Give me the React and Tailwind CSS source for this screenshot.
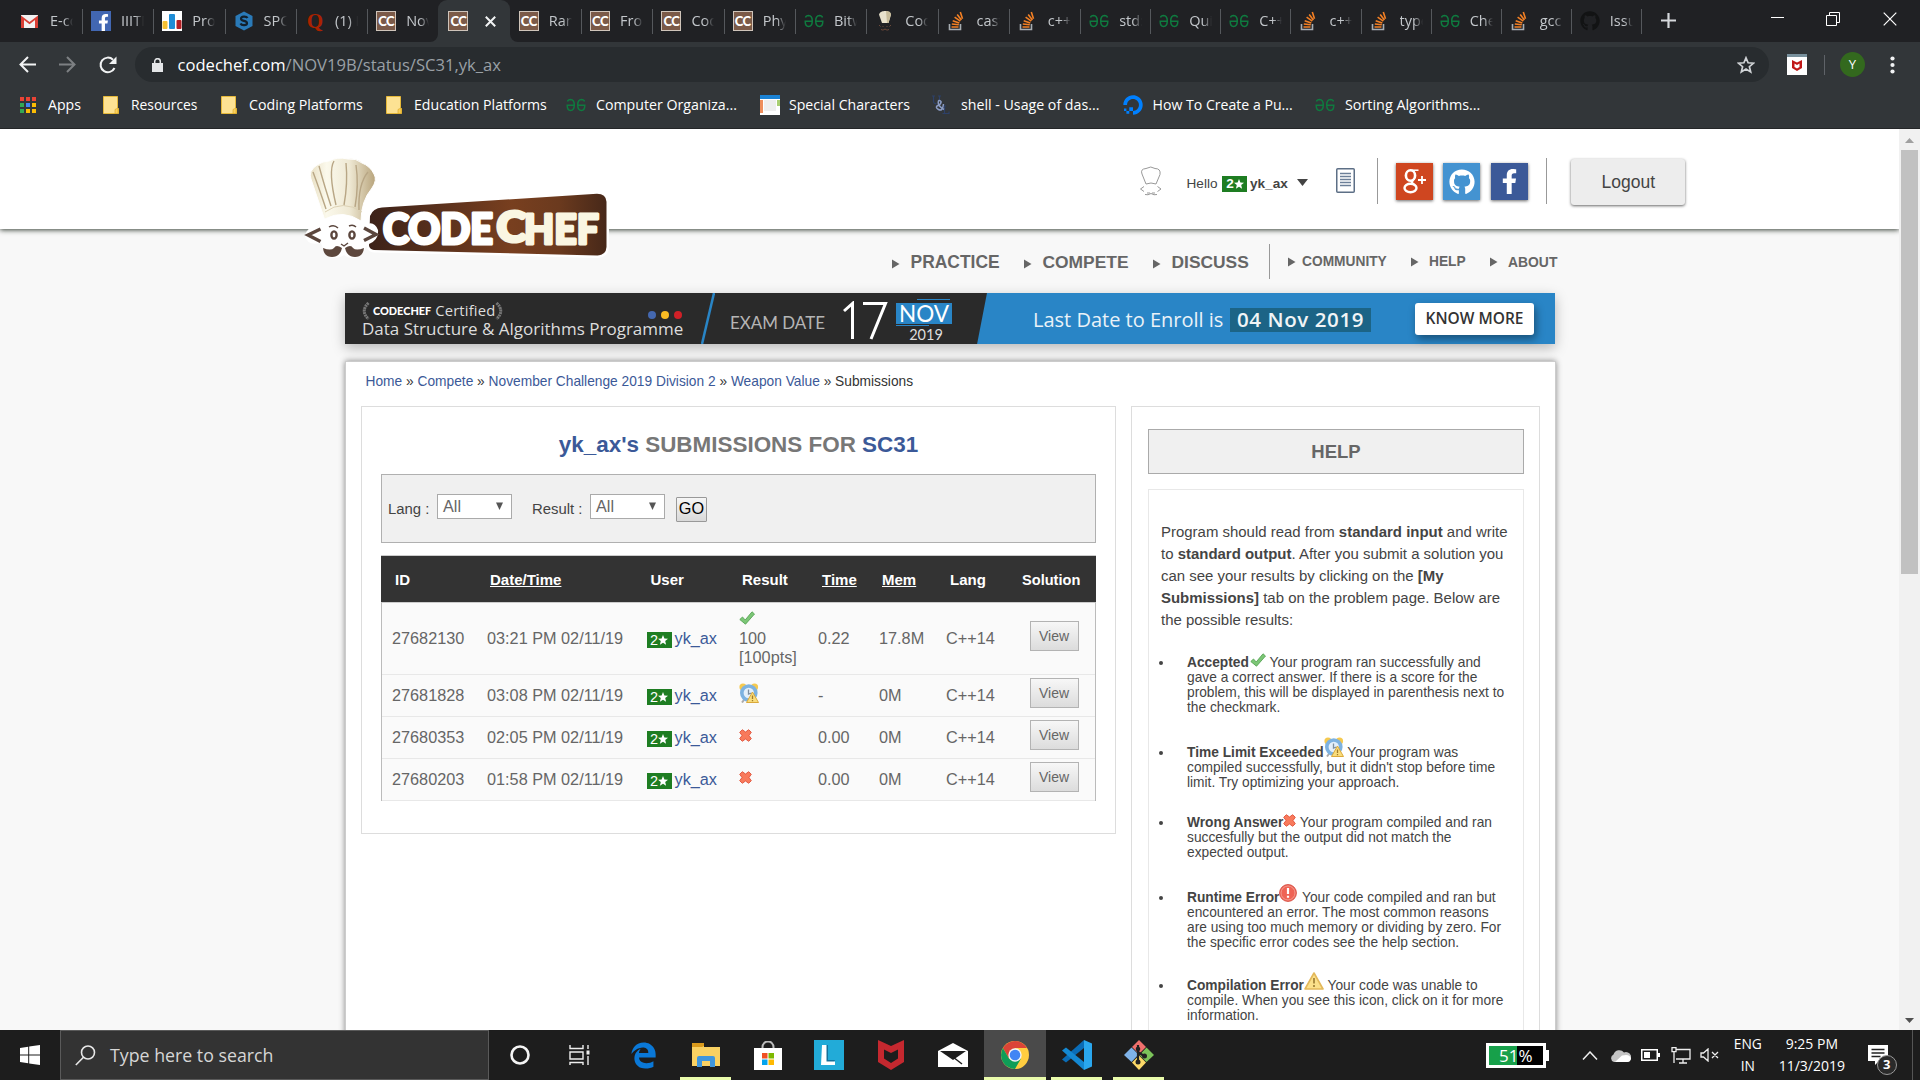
import React from "react";
import { FaGithub, FaFacebookF, FaDigitalOcean, FaEdgeLegacy } from "react-icons/fa";

/* ---------- favicons ---------- */

const Gmail = () => (
  <svg width="19" height="20" viewBox="0 0 19 20">
    <path d="M1 4h17v13H1z" fill="#f2f2f2" />
    <path d="M1 4.500 9.500 11 18 4.500V17h-3V9l-5.500 4.300L4 9v8H1z" fill="#d93f35" />
  </svg>
);
const Facebook = () => (
  <div className="flex size-5 items-end justify-center bg-[#4267b2]">
    <FaFacebookF className="size-[17px] translate-x-[2px] text-white" />
  </div>
);
const Bars = () => (
  <svg width="20" height="20" viewBox="0 0 20 20">
    <path d="M0 0h20v20H0z" fill="#fff" />
    <rect x="0.500" y="10" width="5" height="8" rx="1" fill="#f6c030" />
    <rect x="7" y="3" width="6" height="15" rx="1" fill="#1f8dd6" />
    <rect x="14.500" y="9" width="5" height="9" rx="1" fill="#b21f24" />
  </svg>
);
const Spoj = () => (
  <svg width="20" height="20" viewBox="0 0 20 20">
    <path d="M10 .5 18.500 5v10L10 19.500 1.500 15V5z" fill="#2a7ab8" />
    <path d="M13.500 7c-1-2-6.500-2-6.500.7 0 2.800 6 1.600 6 4.500 0 2.500-5.500 2.500-6.500.3" fill="none" stroke="#12202c" strokeWidth="2.200" />
  </svg>
);
const Quora = () => (
  <div className="flex size-5 items-center justify-center font-['Liberation_Serif',serif] text-[21px] leading-5 font-bold text-[#aa2200]">Q</div>
);
const CC = () => (
  <div className="flex size-5 items-center justify-center border border-[#cfc4ba] bg-[#7b5a48] font-['Lato',sans-serif] text-[13px] leading-none font-black tracking-[-0.5px] text-white">
    CC
  </div>
);
const GG = () => (
  <svg width="20" height="20" viewBox="0 0 20 20" fill="none" stroke="#0f7a3f" strokeWidth="1.500">
    <path d="M1.500 6.500Q2 4.500 4.500 4.500 8.300 4.700 8.300 10T4.500 15.500Q1.200 15.300 1.200 10.200H8.500M18.500 6.500Q18 4.500 15.500 4.500 11.700 4.700 11.700 10T15.500 15.500Q18.800 15.300 18.800 10.200H11.500" />
  </svg>
);
const ChefFav = () => (
  <svg width="20" height="20" viewBox="0 0 20 20">
    <path d="M7 12 4 3.500C5 .5 8 0 10 0s5 .5 6 3.500L13.500 12z" fill="#e9e2cc" />
    <path d="M11 0c3 0 5 1 5 3.500L13.500 12H12z" fill="#c9bd9b" />
    <path d="M4 14l1.500 1.500M16 14l-1.500 1.500M8 15v1M12 15v1M6 18.500q2 1.500 4-.5 2 2 4 .5" stroke="#6b4a3a" fill="none" />
  </svg>
);
const Stack = () => (
  <svg width="20" height="20" viewBox="0 0 20 20" fill="none">
    <path d="M2.500 13v5.500h11V13" stroke="#a7adb2" strokeWidth="1.600" />
    <path d="M4.500 16h7M4.800 13l7 .8M5.700 9.700l6.600 2.200M7.600 6.200l5.700 3.900M10.200 3.400l4.200 5.500M13.300 1l2.200 6.800" stroke="#f48024" strokeWidth="1.600" />
  </svg>
);
const GithubDark = () => <FaGithub className="size-5 text-[#121314]" />;

const TABS = [
  [Facebook, "IIITM"], [Bars, "Prob"], [Spoj, "SPOJ"], [Quora, "(1) H"], [CC, "Nove"], "active",
  [CC, "Rank"], [CC, "Fron"], [CC, "Code"], [CC, "Phys"], [GG, "Bitwi"], [ChefFav, "Code"], [Stack, "cast"], [Stack, "c++ -"],
  [GG, "std::"], [GG, "Quic"], [GG, "C++"], [Stack, "c++ -"], [Stack, "type"], [GG, "Chec"], [Stack, "gcc -"], [GithubDark, "Issue"],
];

const fade = "w-[23px] overflow-hidden whitespace-nowrap [mask-image:linear-gradient(to_right,black_60%,transparent)]";

function TabStrip() {
  return (
    <div className="flex h-[42px] bg-[#202124] text-[14.500px] text-[#c3c7cb]">
      <div className="flex h-[42px] w-[82px] shrink-0 items-center pl-[20px]">
        <Gmail />
        <span className={"ml-[11px] " + fade}>E-con</span>
      </div>
      {TABS.map((t, i) => {
        if (t === "active")
          return (
            <div key={i} className="relative flex h-[42px] w-[71.300px] shrink-0 items-center rounded-t-[9px] bg-[#323639] pl-[10px]">
              <CC />
              <svg className="ml-[17px]" width="11" height="11" viewBox="0 0 11 11"><path d="M.8.8l9.400 9.400M10.200.8.8 10.200" stroke="#f1f3f4" strokeWidth="2" /></svg>
              <svg className="absolute bottom-0 -left-2" width="8" height="8"><path d="M8 0v8H0a8 8 0 0 0 8-8" fill="#323639" /></svg>
              <svg className="absolute -right-2 bottom-0" width="8" height="8"><path d="M0 0v8h8a8 8 0 0 1-8-8" fill="#323639" /></svg>
            </div>
          );
        const Icon = t[0];
        return (
          <div key={i} className={"flex h-[42px] shrink-0 items-center " + (i < 14 ? "w-[71.300px]" : "w-[70.100px]")}>
            <span className={"h-[25px] w-px " + (i === 6 ? "bg-transparent" : "bg-[#55585c]")} />
            <span className="ml-[8px] shrink-0"><Icon /></span>
            <span className={"ml-[10px] " + fade}>{t[1]}</span>
          </div>
        );
      })}
      <span className="mt-[9px] h-[25px] w-px bg-[#55585c]" />
      <svg className="mt-[13px] ml-[19px]" width="15" height="15" viewBox="0 0 15 15"><path d="M7.500 0v15M0 7.500h15" stroke="#d5d8db" strokeWidth="2.200" /></svg>
      <svg className="mt-[17px] ml-[95px]" width="13" height="2"><path d="M0 .5h13" stroke="#fff" /></svg>
      <svg className="mt-[12px] ml-[42px]" width="14" height="14" fill="none"><path d="M.5 3.500h10v10H.5zM3.500 3V.5h10v10H11" stroke="#fff" /></svg>
      <svg className="mt-[12px] ml-[43px]" width="14" height="14"><path d="M.7.7l12.600 12.600M13.300.7.7 13.300" stroke="#fff" strokeWidth="1.200" /></svg>
    </div>
  );
}

function Toolbar() {
  return (
    <div className="flex h-[45px] items-center">
      <svg className="ml-[19px]" width="17" height="17" viewBox="0 0 17 17" fill="none" stroke="#f1f3f4" strokeWidth="2"><path d="M17 8.500H2M9 1 1.500 8.500 9 16" /></svg>
      <svg className="ml-[23px]" width="17" height="17" viewBox="0 0 17 17" fill="none" stroke="#7d8083" strokeWidth="2"><path d="M0 8.500h15M8 1l7.500 7.500L8 16" /></svg>
      <svg className="ml-[23px]" width="18" height="18" viewBox="0 0 18 18"><path d="M15.500 12A7.300 7.300 0 1 1 14 3.700" fill="none" stroke="#f1f3f4" strokeWidth="2" /><path d="M17.500.5v7.500H10z" fill="#f1f3f4" /></svg>
      <div className="ml-[18px] flex h-[35px] w-[1634px] items-center rounded-full bg-[#282c2f] pl-[17px]">
        <svg width="11" height="14" viewBox="0 0 11 14"><path d="M0 5h11v9H0z" fill="#e4e6e8" /><path d="M2.700 5V3.500a2.800 2.800 0 0 1 5.600 0V5" fill="none" stroke="#e4e6e8" strokeWidth="1.500" /></svg>
        <span className="mt-[2px] ml-[14.500px] text-[16.600px] whitespace-nowrap text-[#9aa0a6]"><span className="text-white">codechef.com</span>/NOV19B/status/SC31,yk_ax</span>
        <svg className="ml-auto mr-[14px]" width="18" height="18" viewBox="0 0 18 18" fill="none" stroke="#d0d3d6" strokeWidth="1.700"><path d="M9 1.800l2.100 5 5.400.4-4.100 3.500 1.300 5.300L9 13.100 4.300 16l1.300-5.300L1.500 7.200l5.400-.4z" /></svg>
      </div>
      <svg className="ml-[18px]" width="20" height="21" viewBox="0 0 20 21"><path d="M0 0h20v21H0z" fill="#fff" /><path d="M0 0h20v3H0z" fill="#78909c" /><path d="M5 6l5 2.500L15 6v8l-5 3-5-3z" fill="#c01818" /><path d="M7.500 9.500 10 11l2.500-1.500v3.500L10 14.500 7.500 13z" fill="#fff" /></svg>
      <span className="ml-[17px] h-5 w-px bg-[#5f6368]" />
      <span className="ml-[15px] flex size-[25px] items-center justify-center rounded-full bg-[#33691e] text-[13px] text-white">Y</span>
      <svg className="ml-[25px]" width="5" height="18" fill="#f1f3f4"><circle cx="2.500" cy="2.500" r="2.100" /><circle cx="2.500" cy="9" r="2.100" /><circle cx="2.500" cy="15.500" r="2.100" /></svg>
    </div>
  );
}

const Folder = () => (
  <svg width="16" height="18" viewBox="0 0 16 18"><path d="M.5.5h14v11l1 1v5H.5z" fill="#fde293" stroke="#e6b93a" /><path d="M12 17.500v-4l3-1.500v5.500z" fill="#fbd15c" stroke="#d9a520" strokeWidth=".6" /></svg>
);

function Bookmarks() {
  const c = ["#ea4335", "#ea4335", "#ea4335", "#34a853", "#4285f4", "#fbbc04", "#34a853", "#fbbc04", "#fbbc04"];
  const item = "flex items-center whitespace-nowrap";
  return (
    <div className="flex h-[40px] items-center pb-[4px] pl-[20px] text-[14.120px] text-white">
      <div className={item + " w-[83px]"}>
        <div className="grid grid-cols-3 gap-[2px]">{c.map((x, i) => <span key={i} className="size-1" style={{ background: x }} />)}</div>
        <span className="ml-[12px]">Apps</span>
      </div>
      <div className={item + " w-[118px]"}><Folder /><span className="ml-[12px] text-[13.850px]">Resources</span></div>
      <div className={item + " w-[165px]"}><Folder /><span className="ml-[12px] text-[14.200px]">Coding Platforms</span></div>
      <div className={item + " w-[180px]"}><Folder /><span className="ml-[12px]">Education Platforms</span></div>
      <div className={item + " w-[194px]"}><GG /><span className="ml-[10px] text-[14.200px]">Computer Organiza...</span></div>
      <div className={item + " w-[172px]"}>
        <svg width="20" height="20"><path d="M0 0h20v20H0z" fill="#fff" /><path d="M0 0h20v4H0z" fill="#1a82d4" /><path d="M0 5h3v13H0z" fill="#ee8e5c" /><path d="M4 5h12v11H4z" fill="#eee" /><path d="M17 5h3v6h-3z" fill="#a9cf73" /></svg>
        <span className="ml-[9px]">Special Characters</span>
      </div>
      <div className={item + " w-[191px]"}>
        <svg width="18" height="20" viewBox="0 0 18 20" fill="none">
          <path d="M0 1h3M1.500 1v5q0 3 3 2.500M6 1h3M7.500 1v4M11 11h3M12.500 11v7.500M10.500 18.500h6.500v-2" stroke="#2d4068" strokeWidth="1.200" />
          <path d="M12 14.500Q6 11 6.200 7.500T9 6.500Q9.500 9 6 10.500T6.500 14.500 11.500 9" stroke="#8b9cc4" strokeWidth="1.500" />
        </svg>
        <span className="ml-[11px] text-[14.200px]">shell - Usage of das...</span>
      </div>
      <div className={item + " w-[192px]"}><FaDigitalOcean className="size-5 text-[#0080ff]" /><span className="ml-[9.500px]">How To Create a Pu...</span></div>
      <div className={item}><GG /><span className="ml-[10px] text-[14.350px]">Sorting Algorithms...</span></div>
    </div>
  );
}

/* ---------- site header ---------- */

function Logo() {
  return (
    <svg className="absolute top-[25px] left-[300px]" width="315" height="112" viewBox="300 154 315 112">
      <defs>
        <linearGradient id="plate"><stop offset="0" stopColor="#3c2219" /><stop offset=".6" stopColor="#783f1f" /><stop offset=".8" stopColor="#6b3a1e" /><stop offset="1" stopColor="#472819" /></linearGradient>
        <linearGradient id="hat"><stop offset="0" stopColor="#e9e0c4" /><stop offset=".25" stopColor="#fbf9ec" /><stop offset=".6" stopColor="#efe9d4" /><stop offset="1" stopColor="#b8a47c" /></linearGradient>
      </defs>
      <path d="M370 216q3-8 12-8.500L597 193.700q9 0 9.500 8V247q-.5 8-9 8.500L374 250q-4-.5-5-4z" fill="url(#plate)" stroke="#fff" strokeWidth="5" />
      <path d="M370 216q3-8 12-8.500L597 193.700q9 0 9.500 8V247q-.5 8-9 8.500L374 250q-4-.5-5-4z" fill="url(#plate)" />
      <path d="M324 218q18-12 37 2l4 5q9-5 13 5 1 10-9 14-4 2-5 8-4 6-11 6-6 0-9-3-4 3-10 3-8-1-10-7l-3-8q-14 3-16-7 2-12 17-9z" fill="#fff" />
      <path d="M324.500 219 311 179q-3-8 6-14 6-4 12-4 8-4.500 19-2 8-1 14 4 8 3 12 11 3.500 6-2 14-11 13-11 33-18-12-36-2z" fill="url(#hat)" stroke="#fff" strokeWidth="1" />
      <path d="M325 212q18-13 37 0" fill="none" stroke="#ddd2b5" />
      <path d="M313 172q6 16 13 37M319 166q6 22 12 40M334 161q-6 10 2 44M346 163q2 20-2 42M356 165q3 20-1 42M368 172q-10 12-9 38" fill="none" stroke="#b8a685" strokeWidth="1.400" />
      <path d="M320.500 229 308 235l12.500 6.500M364 228l12 6.500-12 6" fill="none" stroke="#5b463d" strokeWidth="3.400" />
      <ellipse cx="334" cy="235" rx="2.600" ry="3.600" fill="#fff" stroke="#5b463d" strokeWidth="2.400" />
      <ellipse cx="352" cy="235" rx="2.600" ry="3.600" fill="#fff" stroke="#5b463d" strokeWidth="2.400" />
      <path d="M329 227q5-3 9 1M349 226q4-2 7 1M341 244l3 2 4-3" fill="none" stroke="#5b463d" strokeWidth="1.400" />
      <path d="M342 248q-6-4-8 0-3 3-11 0 1 9 9 9 8 0 10-9zM345 248q6-4 8 0 3 3 11 0-1 9-9 9-8 0-10-9z" fill="#5d473d" />
      <g fontFamily="Lato, sans-serif" fontWeight="900" strokeLinejoin="round">
        <text x="383" y="243.500" fontSize="42" textLength="110" lengthAdjust="spacingAndGlyphs" fill="#fff" stroke="#fff" strokeWidth="3.200">CODE</text>
        <text x="496.500" y="242" fontSize="42" textLength="30" lengthAdjust="spacingAndGlyphs" fill="#faf6e2" stroke="#faf6e2" strokeWidth="3.200">C</text>
        <text x="524" y="251" fontSize="41" textLength="75" lengthAdjust="spacingAndGlyphs" fill="#faf6e2" stroke="#faf6e2" strokeWidth="3" transform="translate(0 -7.500)">HEF</text>
      </g>
    </svg>
  );
}

const Star = () => (
  <svg width="10" height="10" viewBox="0 0 10 10"><path d="M5 0l1.400 3.500 3.600.2-2.800 2.300.9 3.700L5 7.700 1.900 9.700l.9-3.700L0 3.700l3.600-.2z" fill="#fff" /></svg>
);

function Header() {
  return (
    <div className="relative z-10 h-[100px] bg-white shadow-[0_1px_5px_rgba(20,30,20,0.85)]">
      <Logo />
      <div className="flex h-[100px] items-start pl-[1139px] text-[13.600px] text-[#444]">
        <svg className="mt-[37px]" width="24" height="30" viewBox="0 0 24 30" fill="none" stroke="#999"><path d="M7 18 3 8Q1 3 7 2.500q5-3 9 0 6 0 5 6L17 18q-5-2-10 0M5 20.500 1.500 23 5 25.500M18.500 20.500 22 23l-3.500 2.500M6 28.500q3 1 6-1 3 2 6 1M8 27h3M13 27h3" /></svg>
        <span className="mt-[45px] ml-[23.500px] leading-5">Hello</span>
        <span className="mt-[47px] ml-[5px] flex h-4 w-[25px] items-center justify-center bg-[#1e7d22] font-bold text-white">2<Star /></span>
        <b className="mt-[45px] ml-[2.500px] leading-5">yk_ax</b>
        <svg className="mt-[50px] ml-[9px]" width="11" height="7"><path d="M0 0h11L5.500 7z" fill="#444" /></svg>
        <svg className="mt-[39px] ml-[28.500px]" width="19" height="25" fill="none"><rect x=".75" y=".75" width="17.500" height="23.500" rx="1" stroke="#5d6f86" strokeWidth="1.500" /><path d="M4 5.500h11M4 8.500h11M4 11.500h11M4 14.500h11M4 17.500h11" stroke="#6c7f98" strokeWidth="1.500" /></svg>
        <span className="mt-[29px] ml-[22px] h-[46px] w-px bg-[#999]" />
        <span className="mt-[34px] ml-[18px] flex h-[37px] w-[37px] justify-center bg-[#cf4620] font-['Liberation_Serif',serif] text-[36px] leading-[28px] text-white shadow-[0_1px_3px_#0009]">
          <svg width="37" height="37" viewBox="0 0 37 37" fill="none" stroke="#fff">
            <ellipse cx="14.500" cy="12.500" rx="4.600" ry="5.300" strokeWidth="2.600" />
            <path d="M14 7.200h8.500" strokeWidth="1.500" />
            <path d="M17.500 17q-3.500 2 .5 4.500" strokeWidth="2.200" />
            <ellipse cx="14.500" cy="25" rx="6" ry="4.200" strokeWidth="2.400" />
            <path d="M26 13v8M22 17h8" strokeWidth="1.800" />
          </svg>
        </span>
        <span className="mt-[34px] ml-[10px] flex h-[37px] w-[37px] items-center justify-center bg-[#4493d1] shadow-[0_1px_3px_#0009]"><FaGithub className="size-[26px] text-white" /></span>
        <span className="mt-[34px] ml-[11px] flex h-[37px] w-[37px] items-center justify-center bg-[#3b5998] shadow-[0_1px_3px_#0009]"><FaFacebookF className="size-[25px] text-white" /></span>
        <span className="mt-[29px] ml-[18px] h-[46px] w-px bg-[#999]" />
        <span className="mt-[30px] ml-[24px] flex h-[46px] w-[114px] items-center justify-center rounded-[3px] bg-[#ededed] text-[17.500px] shadow-[0_1px_3px_#0009]">Logout</span>
      </div>
    </div>
  );
}

const Tri = ({ c }) => <svg className={c} width="8" height="10"><path d="M0 .5 7.500 5 0 9.500z" fill="#666" /></svg>;

function Nav() {
  return (
    <div className="flex h-[64px] items-start pl-[892px] font-bold text-[#666]">
      <Tri c="mt-[30px]" /><span className="mt-[22px] ml-[10.500px] w-[131.500px] text-[17.450px] leading-[22px]">PRACTICE</span>
      <Tri c="mt-[30px] -ml-[18px]" /><span className="mt-[22px] ml-[10.500px] w-[129.500px] text-[17.400px] leading-[22px]">COMPETE</span>
      <Tri c="mt-[30px] -ml-[19px]" /><span className="mt-[22px] ml-[10.500px] w-[97.500px] text-[17.400px] leading-[22px]">DISCUSS</span>
      <span className="mt-[15px] h-[35px] w-px bg-[#999]" />
      <Tri c="mt-[28px] ml-[18px]" /><span className="mt-[23px] ml-[6px] w-[109px] text-[13.750px] leading-5">COMMUNITY</span>
      <Tri c="mt-[28px]" /><span className="mt-[23px] ml-[10px] w-[61px] text-[13.750px] leading-5">HELP</span>
      <Tri c="mt-[28px]" /><span className="mt-[23px] ml-[10px] text-[13.900px] leading-5">ABOUT</span>
    </div>
  );
}

function Banner() {
  return (
    <div className="relative ml-[345px] flex h-[51px] w-[1210px] bg-[linear-gradient(101deg,#2a2a2a_629.700px,#2985c6_630.700px)] font-['Open_Sans',sans-serif] text-[#ddd] shadow-[0_4px_12px_#0004]">
      <div className="w-[356px] pl-[17px]">
        <div className="flex h-[27px] items-end">
          <svg width="8" height="18" fill="none"><path d="M6.500 1Q-2 9 6.500 17" stroke="#777" strokeWidth="3" strokeDasharray="2 .6" /></svg>
          <span className="ml-[3px] font-['Lato',sans-serif] text-[10.900px] leading-[18px] font-black text-white">CODECHEF</span>
          <span className="ml-[4px] text-[14.800px] leading-[19px] tracking-[0.010em]">Certified</span>
          <svg width="8" height="18" fill="none"><path d="M1.500 1q8.500 8 0 16" stroke="#777" strokeWidth="3" strokeDasharray="2 .6" /></svg>
          <span className="mb-[1px] ml-[145px] flex gap-[5px]">
            <i className="size-2 rounded-full bg-[#4468b0]" /><i className="size-2 rounded-full bg-[#fbbc23]" /><i className="size-2 rounded-full bg-[#d02027]" />
          </span>
        </div>
        <div className="mt-[-1px] text-[17px] leading-[19px] whitespace-nowrap">Data Structure &amp; Algorithms Programme</div>
      </div>
      <svg width="14" height="51"><path d="M13 0 1 51" stroke="#2985c6" strokeWidth="2.500" /></svg>
      <span className="mt-[18px] ml-[15px] w-[113px] font-['Lato',sans-serif] text-[16.950px] leading-6 text-[#b5b5b5]">EXAM DATE</span>
      <svg width="46" height="40" className="mt-[8px]" fill="none"><path d="M1 10 9.500 2.500V38M20 2.500h22.500L28 38" stroke="#fff" strokeWidth="3" /></svg>
      <div className="ml-[7px] w-[56px] text-center">
        <div className="mt-[6px] ml-[21px] h-px w-[33px] bg-[#2985c6]" />
        <div className="mt-[3px] h-[21px] bg-[#2985c6] font-['Lato',sans-serif] text-[22.500px] leading-[21px] text-white">NOV</div>
        <div className="mt-[1px] h-px w-[33px] bg-[#2985c6]" />
        <div className="ml-[4px] font-['Lato',sans-serif] text-[14.500px] leading-[18px]">2019</div>
      </div>
      <span className="mt-[14px] ml-[81px] w-[197px] text-[20px] leading-[26px] whitespace-nowrap text-[#eaf2f8]">Last Date to Enroll is</span>
      <span className="mt-[15px] flex h-[24px] w-[141px] items-center justify-center bg-[#1c6486] pb-px text-[20.500px] font-semibold tracking-[0.600px] whitespace-nowrap text-[#f0f4f6]">04 Nov 2019</span>
      <span className="mt-[10px] ml-[44px] flex h-[32px] w-[119px] items-center justify-center rounded-[3px] bg-white text-[15.500px] font-semibold text-[#333] shadow-[2px_4px_8px_#0006]">KNOW MORE</span>
    </div>
  );
}

/* ---------- verdict icons ---------- */

const Check = ({ c }) => (
  <svg className={c} width="16" height="14" viewBox="0 0 16 14"><path d="M.8 8.500 3.500 6l2.700 3L13 .8 15.500 3 6.500 13.200z" fill="#7cc676" stroke="#58a556" strokeWidth=".9" /></svg>
);
const Cross = ({ c }) => (
  <svg className={c} width="13" height="13" viewBox="0 0 13 13"><path d="M.7 3.300 3.300.7 6.500 3 9.700.7l2.600 2.600L10 6.500l2.300 3.200-2.600 2.600L6.500 10l-3.200 2.300L.7 9.700 3 6.500z" fill="#f87a5c" stroke="#e05038" strokeWidth=".9" /></svg>
);
const Clock = ({ c }) => (
  <svg className={c} width="20" height="20" viewBox="0 0 20 20">
    <circle cx="4" cy="4" r="3.600" fill="#f5c94f" /><circle cx="15.500" cy="4" r="3.600" fill="#f5c94f" />
    <path d="M3 19.500l3-4M14 16l3 3" stroke="#aaa" strokeWidth="2" />
    <circle cx="9.800" cy="10" r="7" fill="#e3effa" stroke="#7db2e0" strokeWidth="3.600" />
    <path d="M9.500 6.500V11l3-1" fill="none" stroke="#7d8f9f" strokeWidth="1.300" />
    <path d="M13.500 9 19.500 19.500H7.500z" fill="#f9dd7c" stroke="#dba93a" /><path d="M13.500 12.500v3.500M13.500 17v1.300" stroke="#a07a2a" strokeWidth="1.300" />
  </svg>
);
const Alert = ({ c }) => (
  <svg className={c} width="18" height="18" viewBox="0 0 18 18"><circle cx="9" cy="9" r="8.400" fill="#ef6355" stroke="#d9564b" /><circle cx="9" cy="9" r="7" fill="none" stroke="#f49a8d" /><path d="M9 4v6M9 11.700v2" stroke="#fff" strokeWidth="2.200" /></svg>
);
const Warn = ({ c }) => (
  <svg className={c} width="20" height="18" viewBox="0 0 20 18"><path d="M10 1 19 17H1z" fill="#fbe08a" stroke="#e3b85a" strokeWidth="1.600" strokeLinejoin="round" /><path d="M10 6v5.500M10 13v2" stroke="#a5853a" strokeWidth="1.800" /></svg>
);

/* ---------- submissions ---------- */

const ROWS = [
  ["27682130", "03:21 PM 02/11/19", "ok", "0.22", "17.8M"],
  ["27681828", "03:08 PM 02/11/19", "tle", "-", "0M"],
  ["27680353", "02:05 PM 02/11/19", "wa", "0.00", "0M"],
  ["27680203", "01:58 PM 02/11/19", "wa", "0.00", "0M"],
];
const COLS = "grid grid-cols-[95px_159.500px_92.500px_79px_61px_67px_83.500px_1fr]";

function Select() {
  return (
    <span className="flex h-[25px] w-[75px] items-center justify-between border border-[#aaa] bg-white pr-[8px] pb-[1px] pl-[5px] text-[16.200px] text-[#666]">
      All<svg width="7" height="8"><path d="M0 .5h7L3.500 8z" fill="#555" /></svg>
    </span>
  );
}

function Submissions() {
  return (
    <div className="h-[428px] w-[755px] border border-[#ddd] px-[19px]">
      <h1 className="mt-[24px] w-[715px] text-center text-[22.450px] leading-[28px] font-bold text-[#777]">
        <span className="text-[#3b5998]">yk_ax's</span> SUBMISSIONS FOR <span className="text-[#3b5998]">SC31</span>
      </h1>
      <div className="mt-[15px] flex h-[69px] w-[715px] items-start border border-[#b0b0b0] bg-[#f0f0f0] pl-[6px] text-[14.900px] text-[#444]">
        <span className="mt-[24px] w-[49px] leading-5">Lang :</span>
        <span className="mt-[19px]"><Select /></span>
        <span className="mt-[24px] ml-[20px] w-[58px] leading-5">Result :</span>
        <span className="mt-[19px]"><Select /></span>
        <span className="mt-[22px] ml-[11px] flex h-[25px] w-[31px] items-center justify-center rounded-[1px] border border-[#999] bg-linear-to-b from-[#f6f6f6] to-[#d9d9d9] pb-[2px] text-[16.250px] text-black">GO</span>
      </div>
      <div className="mt-[12px] w-[715px] border-t border-[#ccc]">
        <div className={COLS + " h-[46px] items-center bg-[#333] pt-[3px] pl-[14px] text-[15px] font-bold text-white"}>
          <span>ID</span><span><u>Date/Time</u></span><span className="pl-px">User</span><span>Result</span><span className="pl-[1px]"><u>Time</u></span><span><u>Mem</u></span><span className="pl-px">Lang</span><span className="-ml-[10.500px] text-[14.600px]">Solution</span>
        </div>
        <div className="border-x border-t border-x-[#bbb] border-t-[#ccc]">
          {ROWS.map((r, i) => {
            const top = i === 0 ? "mt-[26px]" : "mt-[11px]";
            return (
              <div key={r[0]} className={COLS + " items-start border-b border-[#e8e8e8] bg-[#fafafa] pl-[10px] text-[16.250px] leading-[19px] text-[#666] " + (i === 0 ? "h-[72px]" : "h-[42px]")}>
                <span className={top}>{r[0]}</span>
                <span className={top}>{r[1]}</span>
                <span className={"flex " + top}>
                  <span className="mt-[3px] mr-[3px] flex h-4 w-[25px] items-center justify-center bg-[#1e7d22] text-[14.500px] text-white">2<Star /></span>
                  <span className="text-[#3b5998]">yk_ax</span>
                </span>
                {r[2] === "ok" && <span className="pt-[8px]"><Check c="mb-[4px] block" /><span className="block">100</span><span className="block">[100pts]</span></span>}
                {r[2] === "tle" && <Clock c="mt-[8px]" />}
                {r[2] === "wa" && <Cross c="mt-[12px]" />}
                <span className={top}>{r[3]}</span>
                <span className={top}>{r[4]}</span>
                <span className={top}>C++14</span>
                <span className={"flex h-[30px] w-[49px] items-center justify-center border border-[#b3b3b3] bg-linear-to-b from-[#f7f7f7] to-[#dcdcdc] text-[14px] " + (i === 0 ? "mt-[18px]" : "mt-[3px]")}>View</span>
              </div>
            );
          })}
        </div>
      </div>
    </div>
  );
}

function Item({ title, icon, cls, children }) {
  return (
    <li className={"flex " + cls}>
      <span className="mt-[6px] mr-[24px] ml-[-2px] size-1 shrink-0 rounded-full bg-[#444]" />
      <span className="w-[325px]"><b>{title}</b>{icon} {children}</span>
    </li>
  );
}

function Help() {
  return (
    <div className="h-[700px] w-[409px] border border-[#ddd] px-[16px] pt-[22px] text-[#444]">
      <div className="flex h-[45px] w-[376px] items-center justify-center border border-[#aaa] bg-[#f0f0f0] text-[18.500px] font-bold text-[#666]">HELP</div>
      <div className="mt-[15px] h-[620px] w-[376px] border border-[#e8e8e8] pt-[31px] pl-[12px]">
        <p className="text-[14.960px] leading-[22px] whitespace-nowrap">
          Program should read from <b>standard input</b> and write<br />to <b>standard output</b>. After you submit a solution you<br />can see your results by clicking on the <b>[My<br />Submissions]</b> tab on the problem page. Below are<br />the possible results:
        </p>
        <ul className="mt-[24px] text-[13.750px] leading-[15px] whitespace-nowrap">
          <Item title="Accepted" icon={<Check c="-mt-4 ml-px inline align-baseline" />}>
            Your program ran successfully and<br />gave a correct answer. If there is a score for the<br />problem, this will be displayed in parenthesis next to<br />the checkmark.
          </Item>
          <Item cls="mt-[30px]" title="Time Limit Exceeded" icon={<Clock c="-mt-5 inline align-baseline" />}>
            Your program was<br />compiled successfully, but it didn't stop before time<br />limit. Try optimizing your approach.
          </Item>
          <Item cls="mt-[24.500px]" title="Wrong Answer" icon={<Cross c="-mt-4 inline align-baseline" />}>
            Your program compiled and ran<br />succesfully but the output did not match the<br />expected output.
          </Item>
          <Item cls="mt-[30.500px]" title="Runtime Error" icon={<Alert c="-mt-5 mr-px inline align-baseline" />}>
            Your code compiled and ran but<br />encountered an error. The most common reasons<br />are using too much memory or dividing by zero. For<br />the specific error codes see the help section.
          </Item>
          <Item cls="mt-[28px]" title="Compilation Error" icon={<Warn c="-mt-5 inline align-baseline" />}>
            Your code was unable to<br />compile. When you see this icon, click on it for more<br />information.
          </Item>
        </ul>
      </div>
    </div>
  );
}

const Crumb = ({ children }) => <span className="text-[#3b5998]">{children}</span>;

function Page() {
  return (
    <div className="flex h-[901px] overflow-hidden bg-[#f8f8f8] font-['Liberation_Sans',Arial,sans-serif]">
      <div className="w-[1899px] shrink-0 overflow-hidden">
        <Header />
        <Nav />
        <Banner />
        <div className="mt-[17px] ml-[345px] h-[800px] w-[1211px] border border-[#ccc] bg-white pt-[10px] shadow-[0_0_6px_#0007]">
          <div className="pl-[19.500px] text-[13.750px] leading-5 text-[#333]">
            <Crumb>Home</Crumb> » <Crumb>Compete</Crumb> » <Crumb>November Challenge 2019 Division 2</Crumb> » <Crumb>Weapon Value</Crumb> » Submissions
          </div>
          <div className="mt-[14px] flex gap-[15px] pl-[15px]">
            <Submissions />
            <Help />
          </div>
        </div>
      </div>
      <div className="flex w-[21px] flex-col items-center bg-[#f1f1f1]">
        <svg className="mt-[9px]" width="9" height="5"><path d="M0 5 4.500 0 9 5z" fill="#a0a0a0" /></svg>
        <span className="mt-[7px] h-[424px] w-[17px] bg-[#c1c1c1]" />
        <svg className="mt-auto mb-[7px]" width="9" height="5"><path d="M0 0h9L4.500 5z" fill="#505050" /></svg>
      </div>
    </div>
  );
}

/* ---------- taskbar ---------- */

const slot = "relative flex h-[50px] w-[61.900px] shrink-0 items-center justify-center";
const Line = () => <span className="absolute bottom-0 left-[5px] h-[3px] w-[51px] bg-[#e9fbab]" />;

function Taskbar() {
  return (
    <div className="flex h-[50px] items-center bg-[#1d1d1d] text-white">
      <div className="flex w-[60px] justify-center">
        <svg width="20" height="20" viewBox="0 0 20 20" fill="#fff"><path d="M0 3l8.200-1.200v7.700H0zM9.200 1.600 20 0v9.500H9.200zM0 10.500h8.200v7.700L0 17zM9.200 10.500H20V20L9.200 18.400z" /></svg>
      </div>
      <div className="flex h-[50px] w-[429px] items-center border border-[#5a5a5a] bg-[#333] pl-[14px]">
        <svg width="21" height="21" viewBox="0 0 21 21" fill="none" stroke="#e8e8e8" strokeWidth="1.600"><circle cx="13" cy="7.500" r="6.500" /><path d="M8.500 12.300.8 20" /></svg>
        <span className="ml-[14px] text-[17.770px] text-[#d6d6d6]">Type here to search</span>
      </div>
      <div className={slot}><svg width="20" height="20" fill="none"><circle cx="10" cy="10" r="8.500" stroke="#f4f4f4" strokeWidth="2.600" /></svg></div>
      <div className={slot + " pr-1"}>
        <svg width="22" height="20" viewBox="0 0 22 20" fill="none" stroke="#eee" strokeWidth="1.400"><path d="M1 0v3.500h13V0M1 7h13v7H1zM1 20v-2.500h13V20M19 0v4M19 11v9" /><path d="M19 5.500v4" strokeWidth="3" /></svg>
      </div>
      <div className={slot}><FaEdgeLegacy className="size-[27px] text-[#0a78d7]" /></div>
      <div className={slot}>
        <svg width="30" height="24" viewBox="0 0 30 24"><path d="M1 0h12v4h16v19H1z" fill="#f9d162" /><path d="M1 0h12v3L11 4H1z" fill="#d99a1c" /><path d="M6 24V15q0-2 2-2h14q2 0 2 2v9h-5v-6h-8v6z" fill="#3f96dd" /></svg>
        <Line />
      </div>
      <div className={slot}>
        <svg width="30" height="29" viewBox="0 0 30 29"><path d="M9.500 9V6a5.500 5.500 0 0 1 11 0v3" fill="none" stroke="#bbb" strokeWidth="2" /><path d="M1 7h28v22H1z" fill="#fff" /><path d="M9 12h5.500v5.500H9z" fill="#f04f23" /><path d="M15.500 12H21v5.500h-5.500z" fill="#7eb900" /><path d="M9 18.500h5.500V24H9z" fill="#03a4ee" /><path d="M15.500 18.500H21V24h-5.500z" fill="#ffb901" /></svg>
      </div>
      <div className={slot}><svg width="30" height="30"><path d="M0 0h30v30H0z" fill="#22abd8" /><path d="M8 25l4-5V5h2v15h7l-2 5z" fill="#0d4a72" opacity=".6" /><path d="M8 5h4.500v16.500H21V25H7z" fill="#fff" /></svg></div>
      <div className={slot}><svg width="28" height="30" viewBox="0 0 28 30"><path d="M1 0l13 6L27 0v22l-13 8L1 22zM7 9.500v9L14 23l7-4.500v-9L14 13z" fill="#c5282f" fillRule="evenodd" /></svg></div>
      <div className={slot}><svg width="30" height="25" viewBox="0 0 30 25"><path d="M0 8 15 0l15 8v16H0z" fill="#fff" /><path d="M2 8h26L15 17z" fill="#1d1d1d" /><path d="M15 14l9 7" stroke="#1d1d1d" strokeWidth="1.500" /></svg></div>
      <div className={slot + " bg-[#4a4a4a]"}>
        <svg width="28" height="28" viewBox="0 0 28 28">
          <circle cx="14" cy="14" r="14" fill="#ffcd40" />
          <path d="M1.900 7A14 14 0 0 1 26.100 7H14L8 17.500z" fill="#db4437" />
          <path d="M1.900 7A14 14 0 0 0 14 28l6-10.500H8z" fill="#0f9d58" />
          <circle cx="14" cy="14" r="6.700" fill="#f4f4f4" /><circle cx="14" cy="14" r="5.300" fill="#4285f4" />
        </svg>
        <span className="absolute bottom-0 left-0 h-[3px] w-full bg-[#e9fbab]" />
      </div>
      <div className={slot}>
        <svg width="30" height="30" viewBox="0 0 30 30"><path d="M22 0l8 3.500v23L22 30z" fill="#2aa7ee" /><path d="M22 0v8L4 22.500 0 19.500z" fill="#0a6cb6" /><path d="M22 30v-8L4 7.500 0 10.500z" fill="#1488d2" /></svg>
        <Line />
      </div>
      <div className={slot}>
        <svg width="30" height="30" viewBox="0 0 30 30"><path d="M15 0l7 7-7 7-7-7z" fill="#f0706c" /><path d="M7.500 7.500l7 7-7 7.500-7.500-7z" fill="#7fb2e8" /><path d="M22.500 7.500 30 15l-7.500 7-7-7z" fill="#7cc35a" /><path d="M15 15.500l7 7L15 30l-7-7.500z" fill="#fbd968" /><path d="M14 5v18M14 12l6 4" stroke="#222" strokeWidth="2.200" /><circle cx="14" cy="22" r="2.500" fill="#222" /><circle cx="20.500" cy="16" r="2.500" fill="#222" /><circle cx="14" cy="9" r="2.300" fill="#222" /></svg>
        <Line />
      </div>
      <div className="ml-[316px] flex h-[25px] w-[60px] items-center justify-center border-[3px] border-white bg-[linear-gradient(to_right,#17a04a_51%,#000_51%)] text-[17px] leading-none">51%</div>
      <span className="h-[11px] w-[3px] bg-white" />
      <svg className="ml-[33px]" width="16" height="9" fill="none"><path d="M1 8.500 8 1l7 7.500" stroke="#eee" strokeWidth="1.500" /></svg>
      <svg className="ml-[12px]" width="21" height="13" viewBox="0 0 21 13"><path d="M4 13a4 4 0 0 1-.5-7.500A6 6 0 0 1 14 3.500 5 5 0 0 1 18 13z" fill="#c4c4c4" /><path d="M5 13l7-6.500q8-2 9 3-.5 3.500-4 3.500z" fill="#fff" /></svg>
      <svg className="ml-[10px]" width="19" height="12" fill="none"><rect x=".75" y=".75" width="15.500" height="10.500" stroke="#fff" strokeWidth="1.500" /><path d="M3 3h6v6H3zM17 4h2v4h-2z" fill="#fff" /></svg>
      <svg className="ml-[11px]" width="20" height="17" fill="none" stroke="#eee" strokeWidth="1.300"><path d="M5 2.500h14v9.500H5M1 .7h4v4H1zM3 5v11M8 16h8M12 12v4" /></svg>
      <svg className="ml-[9px]" width="20" height="14" fill="none" stroke="#eee" strokeWidth="1.300"><path d="M1 5h2.500L8 1v12L3.500 9H1zM12 4l6 6M18 4l-6 6" /></svg>
      <div className="ml-[10px] w-[36px] text-center text-[13.800px] leading-[22px]">ENG<br />IN</div>
      <div className="ml-[8px] w-[76px] text-center text-[14px] leading-[22px] whitespace-nowrap">9:25 PM<br />11/3/2019</div>
      <div className="relative ml-[18px] h-[50px] w-[44px]">
        <svg className="mt-[15px]" width="20" height="21"><path d="M0 0h20v16h-9l-4 4v-4H0z" fill="#fff" /><path d="M3.500 4.500h13M3.500 8h13M3.500 11.500h9" stroke="#222" strokeWidth="1.300" /></svg>
        <span className="absolute top-[25px] left-[9px] flex size-5 items-center justify-center rounded-full border border-[#999] bg-[#2a2a2a] text-[13px] font-bold">3</span>
      </div>
      <span className="h-[50px] w-px bg-[#555]" />
    </div>
  );
}

export default function App() {
  return (
    <div className="h-[1080px] w-[1920px] overflow-hidden font-['Open_Sans','Noto_Sans',sans-serif]">
      <div className="h-[129px] border-b border-[#242628] bg-[#323639]">
        <TabStrip />
        <Toolbar />
        <Bookmarks />
      </div>
      <Page />
      <Taskbar />
    </div>
  );
}
